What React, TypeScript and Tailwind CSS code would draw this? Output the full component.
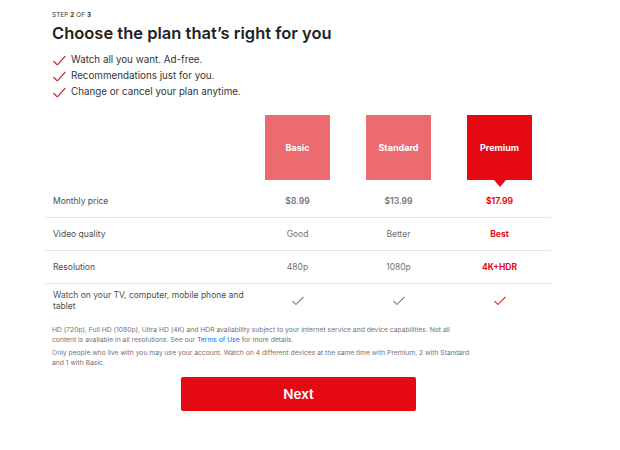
import React from "react";

const RED = "#e50914";

function Check({ color, size = 14 }: { color: string; size?: number }) {
  return (
    <svg width={size} height={size} viewBox="0 0 24 24" fill="none">
      <path d="M3 13.5 L8.5 19 L21 5.5" stroke={color} strokeWidth="2" strokeLinecap="round" strokeLinejoin="round" />
    </svg>
  );
}

function ThinCheck({ color }: { color: string }) {
  return (
    <svg width="14" height="12" viewBox="0 0 24 20" fill="none">
      <path d="M3 10.5 L8.5 16 L21 3.5" stroke={color} strokeWidth="1.8" strokeLinecap="round" strokeLinejoin="round" />
    </svg>
  );
}

const plans = [
  { name: "Basic", price: "$8.99", q: "Good", r: "480p", active: false },
  { name: "Standard", price: "$13.99", q: "Better", r: "1080p", active: false },
  { name: "Premium", price: "$17.99", q: "Best", r: "4K+HDR", active: true },
];

function Row({
  label,
  values,
  last,
}: {
  label: React.ReactNode;
  values: (p: (typeof plans)[number]) => React.ReactNode;
  last?: boolean;
}) {
  return (
    <div
      className={`grid grid-cols-[202px_101px_101px_101px] items-center ${
        last ? "h-[34px]" : "h-[33px] border-b border-[#e6e6e6]"
      }`}
    >
      <div className="pl-[8px] text-[8.5px] leading-[11px] text-[#4d4d4d]">{label}</div>
      {plans.map((p) => (
        <div
          key={p.name}
          className={`flex justify-center text-[8.5px] leading-[11px] ${
            p.active ? "text-[#e50914] font-bold" : "text-[#737373]"
          }`}
        >
          {values(p)}
        </div>
      ))}
    </div>
  );
}

export default function App() {
  return (
    <div
      className="w-[620px] h-[450px] bg-white overflow-hidden"
      style={{ fontFamily: "Inter, 'Noto Sans', sans-serif" }}
    >
      <div className="pl-[45px] pt-[10px] w-[551px]">
        <div className="pl-[7px]">
          <div className="text-[6.2px] leading-[10px] text-[#333] tracking-[0.03em]">
            STEP <b>2</b> OF <b>3</b>
          </div>
          <h1 className="mt-[1px] text-[16.5px] leading-[24px] font-semibold text-[#222]">
            Choose the plan that’s right for you
          </h1>
          <ul className="mt-[7px]">
            {["Watch all you want. Ad-free.", "Recommendations just for you.", "Change or cancel your plan anytime."].map(
              (t) => (
                <li key={t} className="flex items-center h-[16px]">
                  <Check color="#d81f26" size={15} />
                  <span className="ml-[4px] text-[9.8px] text-[#333]">{t}</span>
                </li>
              )
            )}
          </ul>
        </div>

        <div className="mt-[15px]">
          <div className="grid grid-cols-[202px_101px_101px_101px] h-[71px]">
            <div />
            {plans.map((p) => (
              <div key={p.name} className="flex justify-center">
                <div
                  className={`relative w-[65px] h-[65px] flex items-center justify-center text-white text-[9px] font-bold ${
                    p.active ? "bg-[#e50914]" : "bg-[#ec6b71]"
                  }`}
                >
                  {p.name}
                  {p.active && (
                    <div className="absolute left-1/2 -translate-x-1/2 top-full w-0 h-0 border-l-[6px] border-r-[6px] border-t-[7px] border-l-transparent border-r-transparent border-t-[#e50914]" />
                  )}
                </div>
              </div>
            ))}
          </div>
          <div className="grid grid-cols-[202px_101px_101px_101px] items-center h-[32px] border-b border-[#e6e6e6]">
            <div className="pl-[8px] text-[8.5px] text-[#4d4d4d]">Monthly price</div>
            {plans.map((p) => (
              <div
                key={p.name}
                className={`flex justify-center text-[8.5px] ${
                  p.active ? "text-[#e50914] font-bold" : "text-[#737373] font-semibold"
                }`}
              >
                {p.price}
              </div>
            ))}
          </div>
          <Row label="Video quality" values={(p) => p.q} />
          <Row label="Resolution" values={(p) => p.r} />
          <Row
            label="Watch on your TV, computer, mobile phone and tablet"
            values={(p) => <ThinCheck color={p.active ? RED : "#737373"} />}
            last
          />
        </div>

        <div className="pl-[7px] mt-[7px] w-[480px] text-[6.75px] leading-[10px] text-[#737373]">
          <p>
            HD (720p), Full HD (1080p), Ultra HD (4K) and HDR availability subject to your internet service and device
            capabilities. Not all
            <br />
            content is available in all resolutions. See our <span className="text-[#0071eb]">Terms of Use</span> for
            more details.
          </p>
          <p className="mt-[3px]">
            Only people who live with you may use your account. Watch on 4 different devices at the same time with
            Premium, 2 with Standard
            <br />
            and 1 with Basic.
          </p>
        </div>

        <div className="flex justify-center pl-[1px] mt-[9px]">
          <button className="w-[235px] h-[34px] rounded-[2px] bg-[#e50914] text-white text-[13.5px] font-semibold">
            Next
          </button>
        </div>
      </div>
    </div>
  );
}
